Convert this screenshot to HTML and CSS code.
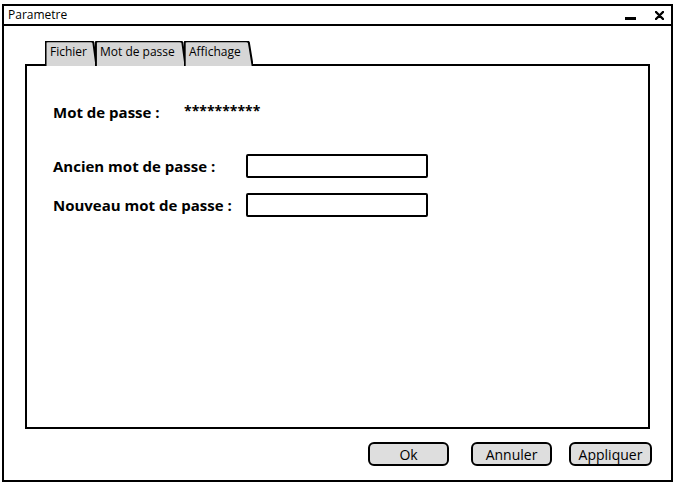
FILE: index.html
```html
<!DOCTYPE html>
<html lang="fr">
<head>
<meta charset="utf-8">
<title>Parametre</title>
<link rel="stylesheet" href="styles.css">
</head>
<body>
<div class="backdrop">
  <div class="window">
    <div class="titlebar">
      <span class="title">Parametre</span>
      <span class="controls">
        <span class="minimize"></span>
        <svg class="close" width="9" height="9" viewBox="0 0 9 9"><path d="M1 1 L8 8 M8 1 L1 8" stroke="#000" stroke-width="2.4" stroke-linecap="round"/></svg>
      </span>
    </div>
    <div class="body">
      <div class="tabs">
        <div class="tab tab-fichier">
          <svg class="tab-shape" viewBox="0 0 100 100" preserveAspectRatio="none"><path d="M1 100 L1 6 Q1 1 6 1 L88 1 Q92 1 93 6 L99 100" fill="#d6d6d6" stroke="#000" stroke-width="2" vector-effect="non-scaling-stroke"/></svg>
          <span class="tab-label">Fichier</span>
        </div>
        <div class="tab tab-mdp">
          <svg class="tab-shape" viewBox="0 0 100 100" preserveAspectRatio="none"><path d="M1 100 L1 6 Q1 1 4 1 L93 1 Q95 1 96 6 L99.5 100" fill="#d6d6d6" stroke="#000" stroke-width="2" vector-effect="non-scaling-stroke"/></svg>
          <span class="tab-label">Mot de passe</span>
        </div>
        <div class="tab tab-aff">
          <svg class="tab-shape" viewBox="0 0 100 100" preserveAspectRatio="none"><path d="M1 100 L1 6 Q1 1 5 1 L90 1 Q93 1 94 6 L99.5 100" fill="#d6d6d6" stroke="#000" stroke-width="2" vector-effect="non-scaling-stroke"/></svg>
          <span class="tab-label">Affichage</span>
        </div>
      </div>
      <div class="panel">
        <div class="row row-pass">
          <span class="label label-short">Mot de passe :</span>
          <span class="stars">**********</span>
        </div>
        <div class="row row-old">
          <span class="label label-long">Ancien mot de passe :</span>
          <span class="field"></span>
        </div>
        <div class="row row-new">
          <span class="label label-long">Nouveau mot de passe :</span>
          <span class="field"></span>
        </div>
      </div>
      <div class="buttons">
        <span class="btn btn-ok">Ok</span>
        <span class="btn btn-cancel">Annuler</span>
        <span class="btn btn-apply">Appliquer</span>
      </div>
    </div>
  </div>
</div>
</body>
</html>
```
FILE: styles.css
```css
html, body {
  margin: 0;
  padding: 0;
  background: #fff;
}
body {
  font-family: "Open Sans", "Lato", sans-serif;
  color: #000;
  width: 674px;
  height: 484px;
  overflow: hidden;
}
.backdrop {
  padding: 4px 1px 2px 2px;
  height: 478px;
}
.window {
  box-sizing: border-box;
  width: 671px;
  height: 478px;
  border: 2px solid #000;
  background: #fff;
  display: flex;
  flex-direction: column;
}
.titlebar {
  height: 18px;
  border-bottom: 2px solid #000;
  display: flex;
  align-items: center;
  justify-content: space-between;
  padding: 0 7px 0 4px;
}
.title {
  font-size: 12px;
  line-height: 18px;
}
.controls {
  display: flex;
  align-items: center;
  gap: 19px;
}
.minimize {
  width: 11px;
  height: 3px;
  background: #000;
  margin-top: 7px;
}
.close {
  display: block;
}
.body {
  flex: 1;
  display: flex;
  flex-direction: column;
  padding: 15px 21px 0 21px;
}
.tabs {
  display: flex;
  padding-left: 20px;
  height: 25px;
  margin-bottom: -2px;
  position: relative;
  z-index: 1;
}
.tab {
  position: relative;
  height: 25px;
  display: flex;
  align-items: center;
}
.tab-shape {
  position: absolute;
  left: 0;
  top: 0;
  width: 100%;
  height: 100%;
}
.tab-label {
  position: relative;
  font-size: 12px;
  padding-left: 5px;
  margin-top: -4px;
}
.tab-fichier { width: 52px; }
.tab-mdp { width: 91px; margin-left: -2px; }
.tab-aff { width: 69px; margin-left: -2px; }
.panel {
  box-sizing: border-box;
  height: 365px;
  border: 2px solid #000;
  padding: 34px 0 0 26px;
  display: flex;
  flex-direction: column;
  background: #fff;
}
.row {
  display: flex;
  align-items: center;
}
.label {
  font-weight: 700;
  font-size: 15px;
}
.label-short { width: 131px; }
.label-long { width: 193px; }
.stars {
  font-weight: 700;
  font-size: 14px;
  margin-top: -4px;
}
.row-pass { height: 24px; }
.row-old { margin-top: 30px; }
.row-new { margin-top: 15px; }
.field {
  box-sizing: border-box;
  width: 182px;
  height: 24px;
  border: 2px solid #000;
  border-radius: 2px;
  background: #fff;
}
.buttons {
  display: flex;
  justify-content: flex-end;
  padding-top: 13px;
}
.btn {
  box-sizing: border-box;
  height: 24px;
  border: 2px solid #000;
  border-radius: 6px;
  background: #dedede;
  font-size: 14px;
  display: flex;
  align-items: center;
  justify-content: center;
}
.btn-ok { width: 81px; }
.btn-cancel { width: 81px; margin-left: 22px; }
.btn-apply { width: 83px; margin-left: 17px; margin-right: -2px; }
```
